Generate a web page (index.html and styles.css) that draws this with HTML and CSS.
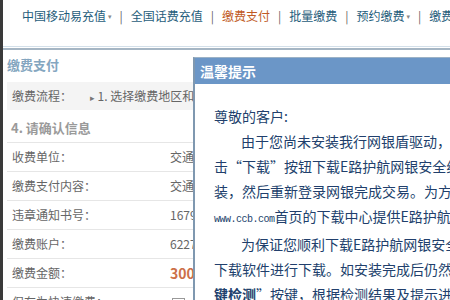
FILE: index.html
```html
<!DOCTYPE html>
<html lang="zh-CN">
<head>
    <meta charset="UTF-8">
    <title>缴费支付</title>
    <link rel="stylesheet" href="styles.css">
</head>
<body>
    <nav class="topnav">
        <a href="#">中国移动易充值<span class="caret">▾</span></a>
        <span class="sep">|</span>
        <a href="#">全国话费充值</a>
        <span class="sep">|</span>
        <a class="active" href="#">缴费支付</a>
        <span class="sep">|</span>
        <a href="#">批量缴费</a>
        <span class="sep">|</span>
        <a href="#">预约缴费<span class="caret">▾</span></a>
        <span class="sep">|</span>
        <a href="#">缴费记录</a>
    </nav>
    <div class="rule"></div>

    <!-- left panel: payment confirmation -->
    <div class="panel">
        <div class="panel-title">缴费支付</div>
        <div class="flow">缴费流程：<span class="arrow">▸</span>1. 选择缴费地区和类型</div>
        <div class="section">4. 请确认信息</div>
        <div class="row"><span class="label">收费单位：</span><span>交通管理局</span></div>
        <div class="row"><span class="label">缴费支付内容：</span><span>交通违章罚款</span></div>
        <div class="row"><span class="label">违章通知书号：</span><span>1679000000</span></div>
        <div class="row"><span class="label">缴费账户：</span><span>6227000000</span></div>
        <div class="row"><span class="label">缴费金额：</span><span class="amount">300.00</span></div>
        <div class="row"><span class="label">保存为快速缴费：</span><span class="check"></span></div>
    </div>

    <!-- popup dialog -->
    <div class="dialog">
        <div class="dialog-head">温馨提示</div>
        <div class="dialog-body">
            <div class="line">尊敬的客户:</div>
            <div class="line indent">由于您尚未安装我行网银盾驱动，无法完成交易。请点</div>
            <div class="line">击“下载”按钮下载E路护航网银安全组件进行安</div>
            <div class="line">装，然后重新登录网银完成交易。为方便您使用，</div>
            <div class="line"><span class="url">www.ccb.com</span>首页的下载中心提供E路护航网银安全组件。</div>
            <div class="line indent">为保证您顺利下载E路护航网银安全组件，建议您</div>
            <div class="line">下载软件进行下载。如安装完成后仍然出现问题，请</div>
            <div class="line"><b>键检测</b>”按键，根据检测结果及提示进行操作。</div>
        </div>
    </div>
</body>
</html>
```

FILE: styles.css
```css
body {
    margin: 0;
    height: 300px;
    overflow: hidden;
    position: relative;
    background-color: #ffffff;
    border-left: 3px solid #3a3a3a;
    font-family: "Noto Sans CJK SC", "DejaVu Sans", sans-serif;
}

/* Top navigation */
.topnav {
    height: 37px;
    padding: 9px 0 0 19px;
    display: flex;
    align-items: flex-start;
    white-space: nowrap;
    font-size: 12px;
    line-height: 14px;
}

.topnav a {
    color: #1f5d7b;
    text-decoration: none;
}

.topnav a.active {
    color: #c05a24;
}

.topnav .caret {
    font-size: 7px;
    color: #8a8a8a;
    margin-left: 2px;
    vertical-align: 2px;
}

.topnav .sep {
    color: #666666;
    margin: 0 8px;
}

.rule {
    height: 4px;
    box-sizing: border-box;
    border-top: 1px solid #d3e0ea;
    border-bottom: 2px solid #a6b6c4;
}

/* Left panel */
.panel {
    width: 320px;
    padding-left: 4px;
    font-size: 12px;
    color: #666666;
}

.panel-title {
    height: 30px;
    line-height: 30px;
    font-size: 13px;
    font-weight: bold;
    color: #84a6c0;
    margin-bottom: 2px;
}

.flow {
    height: 28px;
    line-height: 28px;
    padding-left: 5px;
    background-color: #f4f4f4;
    color: #666666;
}

.flow .arrow {
    font-size: 9px;
    color: #777777;
    margin: 0 3px 0 18px;
}

.section {
    padding: 8px 0 4px 4px;
    line-height: 20px;
    font-size: 13px;
    font-weight: bold;
    color: #9a9a9a;
    border-bottom: 1px solid #e6e6e6;
}

.row {
    display: grid;
    grid-template-columns: 158px 1fr;
    height: 28px;
    line-height: 28px;
    padding-left: 5px;
    border-bottom: 1px solid #e6e6e6;
}

.row .amount {
    font-size: 14px;
    font-weight: bold;
    color: #cc7048;
}

.row .check {
    display: inline-block;
    width: 11px;
    height: 11px;
    margin: 10px 0 0 2px;
    border: 1px solid #999999;
    background-color: #ffffff;
}

/* Popup dialog */
.dialog {
    position: absolute;
    left: 190px;
    top: 57px;
    width: 280px;
    height: 260px;
    background-color: #ffffff;
    border: 1px solid #9cb2c6;
    border-left: 2px solid #7f98b0;
}

.dialog-head {
    height: 26px;
    line-height: 26px;
    padding-left: 5px;
    background-color: #6b96c7;
    color: #ffffff;
    font-size: 14px;
    font-weight: bold;
}

.dialog-body {
    padding: 20px 0 0 19px;
    font-size: 14px;
    line-height: 25px;
    color: #213f6c;
    white-space: nowrap;
    overflow: hidden;
}

.dialog-body .indent {
    padding-left: 27px;
}

.dialog-body .url {
    font-family: "Liberation Mono", monospace;
    font-size: 10px;
    letter-spacing: -0.5px;
}
```
